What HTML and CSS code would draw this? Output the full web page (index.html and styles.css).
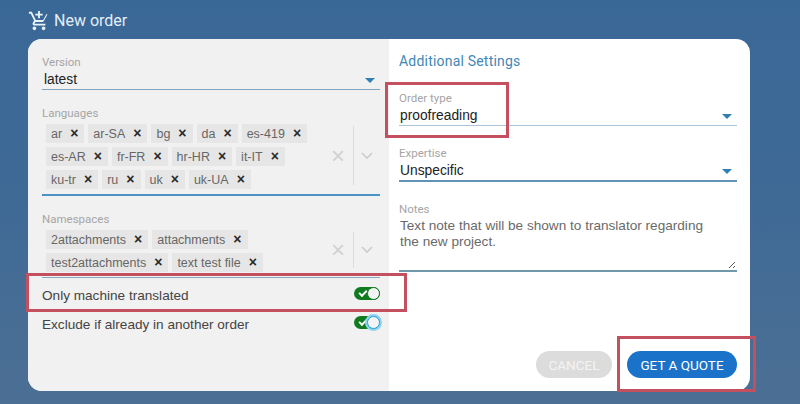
FILE: index.html
```html
<!DOCTYPE html>
<html>

<head>
    <meta charset="UTF-8">
    <title>New order</title>
    <link rel="stylesheet" href="styles.css">
</head>

<body>
    <div class="header">
        <svg class="cart" viewBox="0 0 24 24" width="22" height="22">
            <path fill="#e8f2fa" d="M11 9h2V6h3V4h-3V1h-2v3H8v2h3v3zm-4 9c-1.1 0-2 .9-2 2s.9 2 2 2 2-.9 2-2-.9-2-2-2zm10 0c-1.1 0-2 .9-2 2s.9 2 2 2 2-.9 2-2-.9-2-2-2zM7.17 14.75l.03-.12.9-1.63h7.45c.75 0 1.41-.41 1.75-1.03l3.86-7.01L20.42 4h-.01l-1.1 2-2.76 5H8.53l-.13-.27L6.16 6l-.95-2-.94-2H1v2h2l3.6 7.59-1.35 2.45c-.16.28-.25.61-.25.96 0 1.1.9 2 2 2h12v-2H7.42c-.13 0-.25-.11-.25-.25z"/>
        </svg>
        <span>New order</span>
    </div>

    <div class="modal">
        <div class="left">
            <div class="field">
                <label>Version</label>
                <div class="select">
                    <span>latest</span>
                    <i class="arrow"></i>
                </div>
            </div>

            <div class="field field-languages">
                <label>Languages</label>
                <div class="multi">
                    <div class="chips">
                        <span class="chip">ar <b>×</b></span>
                        <span class="chip">ar-SA <b>×</b></span>
                        <span class="chip">bg <b>×</b></span>
                        <span class="chip">da <b>×</b></span>
                        <span class="chip">es-419 <b>×</b></span>
                        <span class="chip">es-AR <b>×</b></span>
                        <span class="chip">fr-FR <b>×</b></span>
                        <span class="chip">hr-HR <b>×</b></span>
                        <span class="chip">it-IT <b>×</b></span>
                        <span class="chip">ku-tr <b>×</b></span>
                        <span class="chip">ru <b>×</b></span>
                        <span class="chip">uk <b>×</b></span>
                        <span class="chip">uk-UA <b>×</b></span>
                    </div>
                    <div class="multi-tools">
                        <span class="clear">×</span>
                        <svg viewBox="0 0 12 8" width="12" height="8"><path d="M1 1l5 5 5-5" fill="none" stroke="#ccc" stroke-width="1.6"/></svg>
                    </div>
                </div>
            </div>

            <div class="field field-namespaces">
                <label>Namespaces</label>
                <div class="multi multi-thin">
                    <div class="chips">
                        <span class="chip">2attachments <b>×</b></span>
                        <span class="chip">attachments <b>×</b></span>
                        <span class="chip">test2attachments <b>×</b></span>
                        <span class="chip">text test file <b>×</b></span>
                    </div>
                    <div class="multi-tools">
                        <span class="clear">×</span>
                        <svg viewBox="0 0 12 8" width="12" height="8"><path d="M1 1l5 5 5-5" fill="none" stroke="#ccc" stroke-width="1.6"/></svg>
                    </div>
                </div>
            </div>

            <div class="toggle-row toggle-row-first">
                <span>Only machine translated</span>
                <span class="toggle"></span>
            </div>
            <div class="toggle-row">
                <span>Exclude if already in another order</span>
                <span class="toggle toggle-focus"></span>
            </div>
        </div>

        <div class="right">
            <h2>Additional Settings</h2>
            <div class="field">
                <label>Order type</label>
                <div class="select select-thin">
                    <span>proofreading</span>
                    <i class="arrow"></i>
                </div>
            </div>
            <div class="field field-expertise">
                <label>Expertise</label>
                <div class="select select-thick">
                    <span>Unspecific</span>
                    <i class="arrow"></i>
                </div>
            </div>
            <div class="field field-notes">
                <label>Notes</label>
                <div class="notes">
                    Text note that will be shown to translator regarding the new project.
                    <svg class="resizer" viewBox="0 0 8 8" width="8" height="8"><path d="M1 7l6-6M5 7l2-2" stroke="#555" stroke-width="1"/></svg>
                </div>
            </div>
            <div class="actions">
                <button class="btn btn-cancel">CANCEL</button>
                <button class="btn btn-quote">GET A QUOTE</button>
            </div>
        </div>
    </div>

    <!-- red annotation boxes from the screenshot -->
    <div class="mark mark-type"></div>
    <div class="mark mark-machine"></div>
    <div class="mark mark-quote"></div>
</body>

</html>
```

FILE: styles.css
```css
html,
body {
    margin: 0;
    height: 404px;
    overflow: hidden;
}

body {
    position: relative;
    background: linear-gradient(180deg, #3a6896 0%, #3f6a96 50%, #4c6f94 100%);
    font-family: "Liberation Sans", Arial, sans-serif;
}

.header {
    height: 39px;
    padding-left: 28px;
    display: flex;
    align-items: center;
    gap: 4px;
    box-sizing: border-box;
    color: #e3eef8;
    font-family: Roboto, sans-serif;
    font-size: 16px;
    padding-top: 2px;
}

.modal {
    margin-left: 28px;
    width: 722px;
    height: 352px;
    border-radius: 14px;
    overflow: hidden;
    display: flex;
    background: #fff;
}

.left {
    width: 361px;
    box-sizing: border-box;
    padding: 16px 9px 0 14px;
    background: #f1f1f1;
}

.right {
    flex: 1;
    box-sizing: border-box;
    padding: 14px 13px 13px 10px;
    display: flex;
    flex-direction: column;
}

.right h2 {
    margin: 0 0 21px;
    font-family: Roboto, sans-serif;
    font-size: 14px;
    font-weight: 400;
    line-height: 17px;
    letter-spacing: 0.2px;
    color: #3f87b8;
}

label {
    display: block;
    font-family: Roboto, sans-serif;
    font-size: 11.5px;
    line-height: 14px;
    color: #a5a5a5;
}

.select {
    height: 20px;
    padding: 0 5px 0 2px;
    display: flex;
    align-items: center;
    justify-content: space-between;
    border-bottom: 1px solid #7fa6c2;
    font-size: 13.8px;
    color: #222;
}

.select-thin {
    padding-left: 1px;
    height: 20px;
    border-bottom-color: #a9c6dc;
}

.select-thick {
    padding-left: 1px;
    height: 20px;
    border-bottom: 2px solid #5f93b3;
}

.arrow {
    width: 0;
    height: 0;
    border-left: 5px solid transparent;
    border-right: 5px solid transparent;
    border-top: 5px solid #2f7fb5;
    margin-top: 3px;
}

.field-languages {
    margin-top: 16px;
}

.field-namespaces {
    margin-top: 16px;
}

.field-expertise {
    margin-top: 20px;
}

.field-notes {
    margin-top: 20px;
}

.multi {
    display: flex;
    min-height: 71px;
    border-bottom: 2px solid #4b93c3;
    padding-bottom: 3px;
}

.multi-thin {
    min-height: 48px;
    border-bottom: 1px solid #86a9c2;
    padding-bottom: 3px;
}

.chips {
    flex: 1;
    display: flex;
    flex-wrap: wrap;
    align-content: flex-start;
    gap: 4px 4px;
    padding: 4px 0 0 4px;
}

.chip {
    height: 19px;
    padding: 0 6px 0 5px;
    display: inline-flex;
    align-items: center;
    justify-content: space-between;
    gap: 8px;
    background: #e6e6e6;
    font-size: 12.5px;
    color: #666;
}

.chip b {
    font-size: 14px;
    color: #2a2a2a;
    line-height: 19px;
}

.multi-tools {
    width: 54px;
    flex-shrink: 0;
    display: flex;
    align-items: center;
    justify-content: flex-end;
    gap: 10px;
    padding-right: 7px;
    box-sizing: border-box;
    position: relative;
}

.multi-tools::before {
    content: "";
    position: absolute;
    top: 6px;
    bottom: 6px;
    right: 26px;
    width: 1px;
    background: #ddd;
}

.clear {
    font-size: 24px;
    color: #d2d2d2;
    line-height: 20px;
    margin-right: 6px;
}

.toggle-row {
    height: 29px;
    display: flex;
    align-items: center;
    justify-content: space-between;
    font-size: 13.6px;
    color: #444;
}

.toggle-row-first {
    margin-top: 3px;
}

.toggle {
    position: relative;
    width: 26px;
    height: 13px;
    border-radius: 7px;
    background: #0f7a1e;
    margin-top: -4px;
}

.toggle::before {
    content: "";
    position: absolute;
    left: 5px;
    top: 3px;
    width: 6px;
    height: 3px;
    border-left: 2px solid #fff;
    border-bottom: 2px solid #fff;
    transform: rotate(-45deg);
}

.toggle::after {
    content: "";
    position: absolute;
    right: 0;
    top: 0;
    width: 11px;
    height: 11px;
    border: 1px solid #0f7a1e;
    border-radius: 50%;
    background: #f4f4f4;
}

.toggle-focus::after {
    box-shadow: 0 0 0 2px #8ad4f0;
    border-color: #2a9ad0;
}

.notes {
    position: relative;
    height: 52px;
    padding: 2px 20px 0 1px;
    border-bottom: 2px solid #6f98a8;
    font-size: 13.6px;
    line-height: 16px;
    color: #6a6a6a;
}

.resizer {
    position: absolute;
    right: 1px;
    bottom: 1px;
}

.actions {
    margin-top: auto;
    display: flex;
    justify-content: flex-end;
    gap: 15px;
}

.btn {
    height: 27px;
    border: none;
    border-radius: 14px;
    font-family: Roboto, sans-serif;
    font-size: 13.5px;
    color: #fff;
    padding: 0;
}

.btn-cancel {
    width: 76px;
    background: #dcdcdc;
    color: #f4f4f4;
}

.btn-quote {
    width: 110px;
    background: #1a73c9;
}

.mark {
    position: absolute;
    box-sizing: border-box;
    border: 3px solid #c4505f;
}

.mark-type {
    left: 385px;
    top: 82px;
    width: 124px;
    height: 56px;
}

.mark-machine {
    left: 26px;
    top: 273px;
    width: 381px;
    height: 39px;
}

.mark-quote {
    left: 617px;
    top: 336px;
    width: 139px;
    height: 56px;
}
```
